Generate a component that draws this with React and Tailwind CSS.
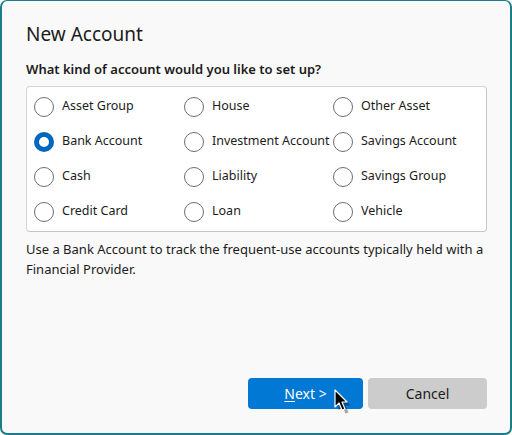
import React from 'react';

const OPTIONS = [
  ['Asset Group', 'House', 'Other Asset'],
  ['Bank Account', 'Investment Account', 'Savings Account'],
  ['Cash', 'Liability', 'Savings Group'],
  ['Credit Card', 'Loan', 'Vehicle'],
];

function Radio({ label, checked }) {
  return (
    <div className="flex items-center h-[35px]">
      {checked ? (
        <span className="w-5 h-5 rounded-full bg-[#0067c0] flex items-center justify-center shrink-0">
          <span className="w-[10px] h-[10px] rounded-full bg-white" />
        </span>
      ) : (
        <span className="w-5 h-5 rounded-full border border-[#6e6e6e] bg-white shrink-0" />
      )}
      <span className="ml-2 text-[12.5px] text-[#1b1b1b] whitespace-nowrap">{label}</span>
    </div>
  );
}

function Cursor() {
  return (
    <svg
      className="absolute left-[332px] top-[388px]"
      width="18"
      height="26"
      viewBox="0 0 18 26"
    >
      <path d="M3 3 L3 20 L7 16 L10 23 L13 22 L10 15 L15 15 Z" fill="rgba(0,0,0,0.35)" transform="translate(1.5,1.5)" />
      <path d="M1 1 L1 18 L5 14 L8 21 L11 20 L8 13 L13 13 Z" fill="#000" stroke="#fff" strokeWidth="1.2" strokeLinejoin="round" />
    </svg>
  );
}

export default function App() {
  const selected = 'Bank Account';
  return (
    <div
      className="relative w-[512px] h-[435px] bg-[#f9f9f9] border-2 border-t border-[#1d7c8a] rounded-[7px] flex flex-col pl-[24px] pr-[23px]"
      style={{ fontFamily: '"Noto Sans", "Segoe UI", Arial, sans-serif' }}
    >
      <h1 className="mt-[20px] text-[19px] leading-[26px] text-[#1b1b1b]">New Account</h1>
      <p className="mt-[13px] text-[13px] leading-[18px] font-semibold text-[#1b1b1b]">
        What kind of account would you like to set up?
      </p>
      <div className="mt-[8px] bg-white border border-[#d5d5d5] border-r-[#c6c6c6] border-b-[#c6c6c6] rounded-[4px] pl-[7px] py-[2px] grid grid-cols-[150px_149px_1fr]">
        {OPTIONS.map((row) =>
          row.map((label) => <Radio key={label} label={label} checked={label === selected} />)
        )}
      </div>
      <p className="mt-[7px] text-[13px] leading-[20px] text-[#1b1b1b]">
        Use a Bank Account to track the frequent-use accounts typically held with a Financial Provider.
      </p>
      <div className="mt-auto mb-[24px] flex justify-end gap-[5px]">
        <button className="w-[115px] h-[31px] rounded-[4px] bg-[#0078d4] text-white text-[14px]">
          <span className="underline underline-offset-2">N</span>ext &gt;
        </button>
        <button className="w-[119px] h-[31px] rounded-[4px] bg-[#cccccc] text-[#1b1b1b] text-[14px]">
          Cancel
        </button>
      </div>
      <Cursor />
    </div>
  );
}
